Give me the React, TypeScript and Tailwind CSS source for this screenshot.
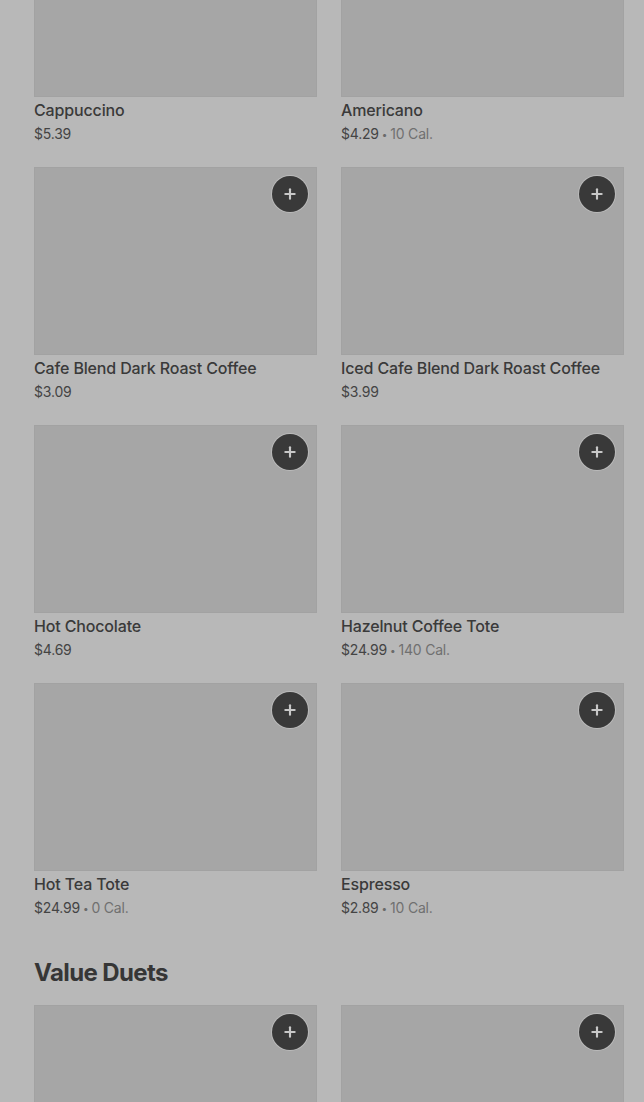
import { Plus } from 'lucide-react';

type Item = {
  name: string;
  price: string;
  cal?: string;
};

const items: Item[] = [
  { name: 'Cappuccino', price: '$5.39' },
  { name: 'Americano', price: '$4.29', cal: '10 Cal.' },
  { name: 'Cafe Blend Dark Roast Coffee', price: '$3.09' },
  { name: 'Iced Cafe Blend Dark Roast Coffee', price: '$3.99' },
  { name: 'Hot Chocolate', price: '$4.69' },
  { name: 'Hazelnut Coffee Tote', price: '$24.99', cal: '140 Cal.' },
  { name: 'Hot Tea Tote', price: '$24.99', cal: '0 Cal.' },
  { name: 'Espresso', price: '$2.89', cal: '10 Cal.' },
];

function AddButton() {
  return (
    <button className="absolute top-2 right-2 w-9 h-9 rounded-full bg-[#393939] flex items-center justify-center shadow-[0_0_0_1px_rgba(200,200,200,0.6)]">
      <Plus size={16} strokeWidth={3.2} className="text-[#c8c8c8]" />
    </button>
  );
}

function Card({ item, showButton = true }: { item: Item; showButton?: boolean }) {
  return (
    <div className="flex flex-col">
      <div className="relative h-[188px] bg-[#a6a6a6] border border-[#a2a2a2]">
        {showButton && <AddButton />}
      </div>
      <div className="mt-px text-[16px] leading-6 font-medium tracking-[-0.15px] text-[#3a3a3a]">{item.name}</div>
      <div className="mt-[2px] text-[14px] leading-5 text-[#444444] tracking-[-0.2px] flex items-center">
        <span>{item.price}</span>
        {item.cal && (
          <>
            <span className="mx-[3px] text-[#6a6a6a] text-[10px]">•</span>
            <span className="text-[#707070]">{item.cal}</span>
          </>
        )}
      </div>
    </div>
  );
}

export default function App() {
  return (
    <main className="w-[644px] h-[1102px] overflow-hidden bg-[#b8b8b8] pl-[34px] pr-[20px]" style={{ fontFamily: 'Inter, "Noto Sans", sans-serif' }}>
      <div className="mt-[-91px] grid grid-cols-2 gap-x-6 gap-y-[23px]">
        {items.map((item, index) => (
          <Card key={index} item={item} showButton={index > 1} />
        ))}
      </div>

      <h2 className="mt-[39px] mb-4 text-[24px] leading-8 font-bold tracking-[-0.6px] text-[#363636]">Value Duets</h2>

      <div className="grid grid-cols-2 gap-x-6">
        <div className="relative h-[188px] bg-[#a6a6a6] border border-[#a2a2a2]">
          <AddButton />
        </div>
        <div className="relative h-[188px] bg-[#a6a6a6] border border-[#a2a2a2]">
          <AddButton />
        </div>
      </div>
    </main>
  );
}
